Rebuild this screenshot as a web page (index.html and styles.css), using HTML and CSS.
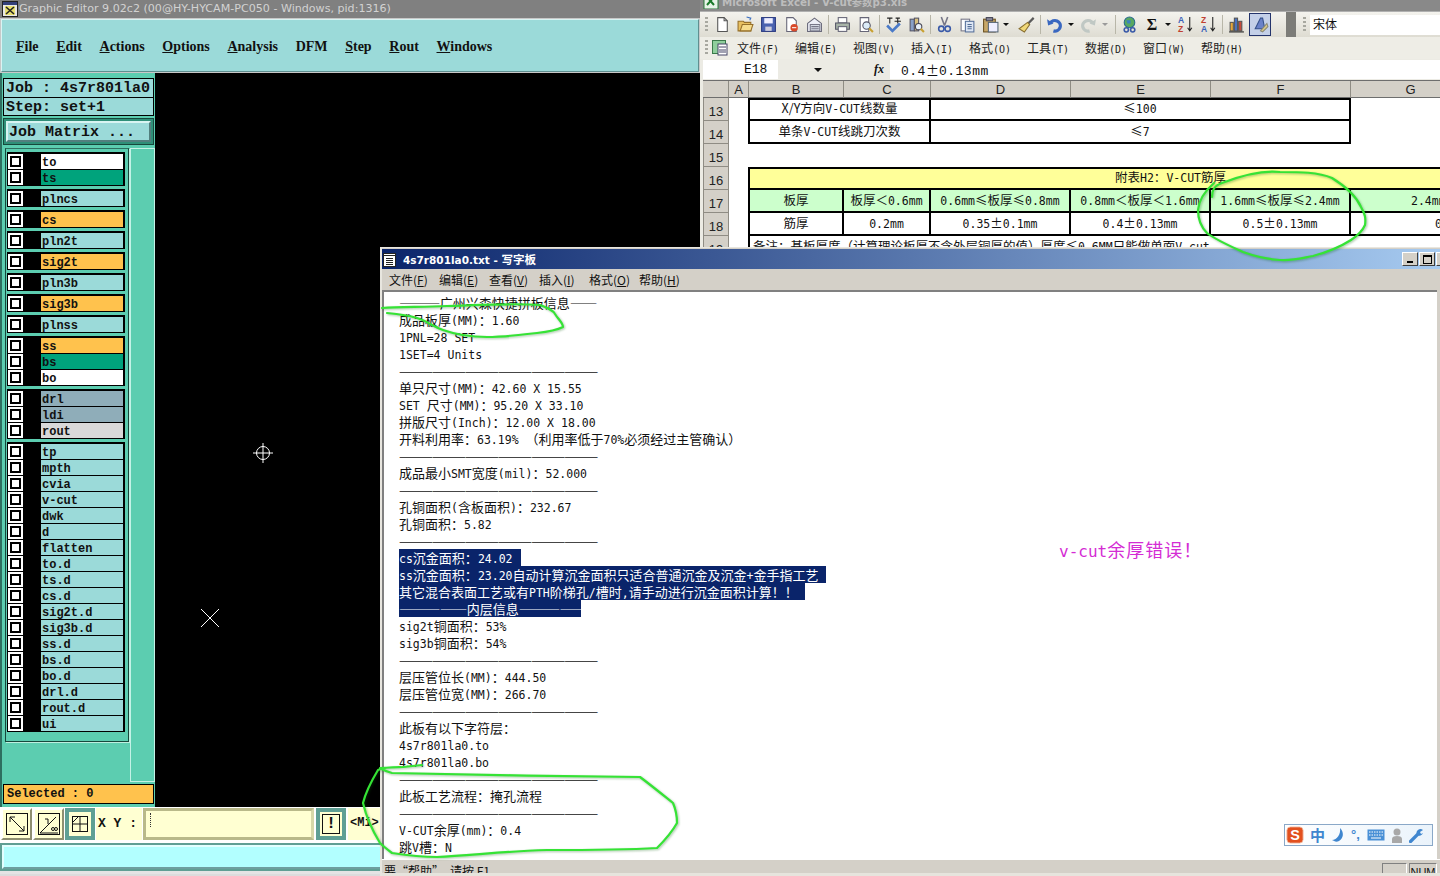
FILE: index.html
```html
<!DOCTYPE html>
<html lang="zh-CN">
<head>
<meta charset="utf-8">
<title>Graphic Editor</title>
<link rel="stylesheet" href="styles.css">
</head>
<body>
<main class="desktop">

<!-- Graphic Editor window -->
<section class="window gwin">
  <header class="g-title">
    <svg class="g-appicon" width="16" height="16" viewBox="0 0 16 16"><rect x=".5" y=".5" width="15" height="15" fill="#e8e8e8" stroke="#222"/><rect x="1" y="1" width="14" height="3" fill="#33407a"/><rect x="3" y="5" width="10" height="9" fill="#e8e070"/><path d="M4 6l8 7M12 6l-8 7" stroke="#222" stroke-width="1.6"/></svg>
    <span>Graphic Editor 9.02c2 (00@HY-HYCAM-PC050 - Windows, pid:1316)</span>
  </header>
  <nav class="g-menu">
    <span><u>F</u>ile</span><span><u>E</u>dit</span><span><u>A</u>ctions</span><span><u>O</u>ptions</span><span><u>A</u>nalysis</span><span>DFM</span><span><u>S</u>tep</span><span><u>R</u>out</span><span><u>W</u>indows</span>
  </nav>
  <div class="g-work">
    <aside class="panel">
      <div class="info">
        <div class="info-row">Job : 4s7r801la0</div>
        <div class="info-row">Step: set+1</div>
      </div>
      <div class="matrix"><div class="matrix-btn">Job Matrix ...</div></div>
      <div class="layers-wrap">
        <div class="layers">
          <div class="grp">
            <div class="row"><i class="cb"></i><b class="lbl white">to</b></div>
            <div class="row"><i class="cb"></i><b class="lbl green">ts</b></div>
          </div>
          <div class="grp"><div class="row"><i class="cb"></i><b class="lbl">plncs</b></div></div>
          <div class="grp"><div class="row"><i class="cb"></i><b class="lbl orange">cs</b></div></div>
          <div class="grp"><div class="row"><i class="cb"></i><b class="lbl">pln2t</b></div></div>
          <div class="grp"><div class="row"><i class="cb"></i><b class="lbl orange">sig2t</b></div></div>
          <div class="grp"><div class="row"><i class="cb"></i><b class="lbl">pln3b</b></div></div>
          <div class="grp"><div class="row"><i class="cb"></i><b class="lbl orange">sig3b</b></div></div>
          <div class="grp"><div class="row"><i class="cb"></i><b class="lbl">plnss</b></div></div>
          <div class="grp">
            <div class="row"><i class="cb"></i><b class="lbl orange">ss</b></div>
            <div class="row"><i class="cb"></i><b class="lbl green">bs</b></div>
            <div class="row"><i class="cb"></i><b class="lbl white">bo</b></div>
          </div>
          <div class="grp">
            <div class="row"><i class="cb"></i><b class="lbl slate">drl</b></div>
            <div class="row"><i class="cb"></i><b class="lbl slate">ldi</b></div>
            <div class="row"><i class="cb"></i><b class="lbl pale">rout</b></div>
          </div>
          <div class="grp">
            <div class="row"><i class="cb"></i><b class="lbl">tp</b></div>
            <div class="row"><i class="cb"></i><b class="lbl">mpth</b></div>
            <div class="row"><i class="cb"></i><b class="lbl">cvia</b></div>
            <div class="row"><i class="cb"></i><b class="lbl">v-cut</b></div>
            <div class="row"><i class="cb"></i><b class="lbl">dwk</b></div>
            <div class="row"><i class="cb"></i><b class="lbl">d</b></div>
            <div class="row"><i class="cb"></i><b class="lbl">flatten</b></div>
            <div class="row"><i class="cb"></i><b class="lbl">to.d</b></div>
            <div class="row"><i class="cb"></i><b class="lbl">ts.d</b></div>
            <div class="row"><i class="cb"></i><b class="lbl">cs.d</b></div>
            <div class="row"><i class="cb"></i><b class="lbl">sig2t.d</b></div>
            <div class="row"><i class="cb"></i><b class="lbl">sig3b.d</b></div>
            <div class="row"><i class="cb"></i><b class="lbl">ss.d</b></div>
            <div class="row"><i class="cb"></i><b class="lbl">bs.d</b></div>
            <div class="row"><i class="cb"></i><b class="lbl">bo.d</b></div>
            <div class="row"><i class="cb"></i><b class="lbl">drl.d</b></div>
            <div class="row"><i class="cb"></i><b class="lbl">rout.d</b></div>
            <div class="row"><i class="cb"></i><b class="lbl">ui</b></div>
          </div>
        </div>
        <div class="strip"></div>
      </div>
      <div class="selected">Selected : 0</div>
    </aside>
    <div class="canvas">
      <svg class="mark mark-cross" width="20" height="20" viewBox="0 0 20 20"><circle cx="10" cy="10" r="6.5" fill="none" stroke="#fff"/><path d="M10 0v20M0 10h20" stroke="#fff"/></svg>
      <svg class="mark mark-x" width="20" height="20" viewBox="0 0 20 20"><path d="M1 1l18 18M19 1L1 19" stroke="#fff"/></svg>
    </div>
  </div>
  <div class="g-tools">
    <div class="tbtn"><svg width="26" height="26" viewBox="0 0 26 26"><rect x="2.5" y="2.5" width="21" height="21" fill="none" stroke="#111"/><path d="M6 6l14 14M6 6v5M6 6h5M20 20v-5M20 20h-5" stroke="#111" fill="none"/></svg></div>
    <div class="tbtn"><svg width="26" height="26" viewBox="0 0 26 26"><rect x="2.5" y="2.5" width="21" height="21" fill="none" stroke="#111"/><path d="M4 22L20 6M4 22h18M12 8v5M9 8h3" stroke="#111" fill="none"/><circle cx="17" cy="18" r="1.5" fill="none" stroke="#111"/><circle cx="20" cy="18" r="1.5" fill="none" stroke="#111"/></svg></div>
    <div class="tbtn tbtn-on"><svg width="18" height="18" viewBox="0 0 18 18"><rect x="1.5" y="1.5" width="15" height="15" fill="none" stroke="#111"/><path d="M9 2v14M2 9h14M2 7L7 2" stroke="#111" fill="none"/></svg></div>
    <div class="xy">X Y :</div>
    <div class="xy-input"><span class="caret"></span></div>
    <div class="tbtn tbtn-on tbtn-bang"><span class="bang">!</span></div>
    <div class="mode">&lt;Mi&gt;</div>
  </div>
  <div class="g-status"><div class="g-status-in"></div></div>
</section>

<!-- Excel window -->
<section class="window xwin">
  <header class="x-title"><svg class="x-appicon" width="16" height="16" viewBox="0 0 16 16"><rect x="1" y="0" width="14" height="16" fill="#e8f4e8" stroke="#2a7a3a"/><path d="M4 4l7 8M11 4l-7 8" stroke="#1a7a2a" stroke-width="2"/></svg><span class="x-title-t">Microsoft Excel - V-cut参数p3.xls</span></header>
  <div class="x-bar">
    <i class="grip"></i>
    <svg class="ic" viewBox="0 0 16 16"><path d="M3.5 1.5h6l3 3v10h-9z" fill="#fff" stroke="#555"/><path d="M9.5 1.5v3h3" fill="none" stroke="#555"/></svg>
    <svg class="ic" viewBox="0 0 16 16"><path d="M1 5h5l1 1h6v8H1z" fill="#e8c060" stroke="#96702a"/><path d="M3 14l2-6h10l-2 6z" fill="#f6dc8c" stroke="#96702a"/><path d="M9 1l4 1-1 2" fill="none" stroke="#3a6ec0"/></svg>
    <svg class="ic" viewBox="0 0 16 16"><rect x="1.5" y="1.5" width="13" height="13" fill="#4a62b0" stroke="#2a3a80"/><rect x="4" y="2" width="8" height="5" fill="#eef"/><rect x="5" y="10" width="6" height="4" fill="#ccd"/></svg>
    <svg class="ic" viewBox="0 0 16 16"><path d="M3.5 1.5h6l3 3v10h-9z" fill="#fff" stroke="#667"/><circle cx="10.500" cy="11" r="3.500" fill="#d84a2a"/><path d="M8.500 11h4" stroke="#fff"/></svg>
    <svg class="ic" viewBox="0 0 16 16"><path d="M1.500 7L8 2l6.500 5v7.500h-13z" fill="#eef0f8" stroke="#667"/><rect x="4" y="8" width="9" height="6" fill="#d8dee8" stroke="#778"/><path d="M5 10h7M5 12h7" stroke="#778"/></svg>
    <i class="sep"></i>
    <svg class="ic" viewBox="0 0 16 16"><rect x="4" y="1.500" width="8" height="5" fill="#fff" stroke="#667"/><path d="M1.500 6.500h13v6h-13z" fill="#a8b4a8" stroke="#556"/><rect x="4" y="10" width="8" height="4.500" fill="#fff" stroke="#667"/></svg>
    <svg class="ic" viewBox="0 0 16 16"><path d="M3 1.500h8v13H3z" fill="#fff" stroke="#667"/><circle cx="9" cy="9" r="3.500" fill="#dcecf8" stroke="#556"/><path d="M11.500 11.500L15 15" stroke="#c8a030" stroke-width="2"/></svg>
    <i class="sep"></i>
    <svg class="ic" viewBox="0 0 16 16"><path d="M2 2h5M4.500 2v5M10 2h4M9 5h6M12 2v5" stroke="#222"/><path d="M2 9l5 5 7-7" fill="none" stroke="#4a7ac8" stroke-width="2.500"/></svg>
    <svg class="ic" viewBox="0 0 16 16"><rect x="2" y="3" width="4" height="11" fill="#88a0c8" stroke="#556"/><rect x="6" y="2" width="4" height="12" fill="#d8c080" stroke="#556"/><circle cx="10" cy="10" r="3" fill="#e8f0f8" stroke="#445"/><path d="M12 12l3 3" stroke="#c8a030" stroke-width="2"/></svg>
    <i class="sep"></i>
    <svg class="ic" viewBox="0 0 16 16"><path d="M5 1l3 8M11 1L8 9" stroke="#778" stroke-width="1.500"/><circle cx="5" cy="12" r="2.500" fill="none" stroke="#3a5aa8" stroke-width="1.500"/><circle cx="11" cy="12" r="2.500" fill="none" stroke="#3a5aa8" stroke-width="1.500"/></svg>
    <svg class="ic" viewBox="0 0 16 16"><rect x="2" y="3" width="8" height="11" fill="#fff" stroke="#778"/><rect x="6" y="5" width="8" height="10" fill="#dde6f4" stroke="#56709a"/><path d="M8 8h4M8 10h4M8 12h4" stroke="#56709a"/></svg>
    <svg class="ic" viewBox="0 0 16 16"><rect x="1.500" y="3" width="11" height="12" fill="#c8a868" stroke="#6a5020"/><rect x="4" y="1.500" width="6" height="3" fill="#889" stroke="#445"/><rect x="6" y="6" width="9" height="9" fill="#eef" stroke="#567"/></svg>
    <i class="dd"></i>
    <svg class="ic ic-tight" viewBox="0 0 16 16"><path d="M9 6l5-5 1.500 1.500-5 5z" fill="#5a5a5a"/><path d="M9 6l2 2-5 7-5-3z" fill="#f0d878" stroke="#8a7030"/></svg>
    <i class="sep"></i>
    <svg class="ic" viewBox="0 0 16 16"><path d="M4 7a5 5 0 1 1 3 7" fill="none" stroke="#3a68c0" stroke-width="3"/><path d="M1 3l1 6 5-2z" fill="#3a68c0"/></svg>
    <i class="dd dd-s"></i>
    <svg class="ic" viewBox="0 0 16 16"><path d="M12 7a5 5 0 1 0-3 7" fill="none" stroke="#c0c8c4" stroke-width="3"/><path d="M15 3l-1 6-5-2z" fill="#c0c8c4"/></svg>
    <i class="dd dd-s dd-off"></i>
    <i class="sep sep-l"></i>
    <svg class="ic" viewBox="0 0 16 16"><circle cx="8" cy="6" r="5" fill="#58a860" stroke="#2a6a90"/><path d="M5 4h4v3H6z" fill="#3a80c0"/><circle cx="5" cy="13" r="2" fill="none" stroke="#3a5aa8" stroke-width="1.500"/><circle cx="11" cy="13" r="2" fill="none" stroke="#3a5aa8" stroke-width="1.500"/></svg>
    <b class="sigma">Σ</b>
    <i class="dd dd-s"></i>
    <svg class="ic" viewBox="0 0 16 16"><path d="M12 1v13M10 11l2 3 2-3" fill="none" stroke="#222"/><text x="1" y="7" class="az az-b">A</text><text x="1" y="15" class="az az-r">Z</text></svg>
    <svg class="ic" viewBox="0 0 16 16"><path d="M12 1v13M10 11l2 3 2-3" fill="none" stroke="#222"/><text x="1" y="7" class="az az-r">Z</text><text x="1" y="15" class="az az-b">A</text></svg>
    <i class="sep"></i>
    <svg class="ic" viewBox="0 0 16 16"><rect x="2" y="6" width="3" height="8" fill="#e8a838" stroke="#555"/><rect x="6" y="2" width="3" height="12" fill="#4a72c0" stroke="#555"/><rect x="10" y="5" width="3" height="9" fill="#c84a3a" stroke="#555"/><path d="M1 15h14" stroke="#222"/></svg>
    <span class="ic-on"><svg class="ic ic-flat" viewBox="0 0 16 16"><path d="M3 12L8 2h2l2 10z" fill="#6a82c8" stroke="#34508a"/><path d="M8 14l6-7 1 3-5 5z" fill="#d8c888" stroke="#887"/></svg></span>
    <i class="chev"></i>
    <i class="grip grip-2"></i>
    <div class="fontbox">宋体</div>
  </div>
  <div class="x-bar x-menu">
    <i class="grip"></i>
    <svg class="x-doc" width="18" height="18" viewBox="0 0 18 18"><rect x="1.500" y="1.500" width="13" height="13" fill="#8fcf9c" stroke="#3a7a4a"/><rect x="7" y="5" width="9" height="11" fill="#fff" stroke="#446"/><path d="M8 8h7M8 11h7M8 13h7" stroke="#446"/></svg>
    <span class="xm">文件<em>(F)</em></span><span class="xm">编辑<em>(E)</em></span><span class="xm">视图<em>(V)</em></span><span class="xm">插入<em>(I)</em></span><span class="xm">格式<em>(O)</em></span><span class="xm">工具<em>(T)</em></span><span class="xm">数据<em>(D)</em></span><span class="xm">窗口<em>(W)</em></span><span class="xm">帮助<em>(H)</em></span>
  </div>
  <div class="x-formula">
    <div class="namebox">E18</div>
    <i class="nb-arrow"></i>
    <i class="fx">fx</i>
    <div class="fbox"><code>0.4</code>±<code>0.13mm</code></div>
  </div>
  <div class="sheet">
    <div class="h corner"></div><div class="h">A</div><div class="h">B</div><div class="h">C</div><div class="h">D</div><div class="h">E</div><div class="h">F</div><div class="h">G</div>

    <div class="rh">13</div><div></div>
    <div class="c first top merge-bc">X/Y方向<code>V-CUT</code>线数量</div>
    <div class="c top merge-df">≤<code>100</code></div><div></div>

    <div class="rh">14</div><div></div>
    <div class="c first merge-bc">单条<code>V-CUT</code>线跳刀次数</div>
    <div class="c merge-df">≤<code>7</code></div><div></div>

    <div class="rh">15</div><div class="blank-row"></div>

    <div class="rh">16</div><div></div>
    <div class="c first top yellow span-all">附表<code>H2</code>：<code>V-CUT</code>筋厚</div>

    <div class="rh">17</div><div></div>
    <div class="c first lgreen">板厚</div>
    <div class="c lgreen">板厚＜<code>0.6mm</code></div>
    <div class="c lgreen"><code>0.6mm</code>≤板厚≤<code>0.8mm</code></div>
    <div class="c lgreen"><code>0.8mm</code>＜板厚＜<code>1.6mm</code></div>
    <div class="c lgreen"><code>1.6mm</code>≤板厚≤<code>2.4mm</code></div>
    <div class="c lgreen open g17"><code>2.4mm</code>＜板厚</div>

    <div class="rh">18</div><div></div>
    <div class="c first">筋厚</div>
    <div class="c"><code>0.2mm</code></div>
    <div class="c"><code>0.35</code>±<code>0.1mm</code></div>
    <div class="c"><code>0.4</code>±<code>0.13mm</code></div>
    <div class="c"><code>0.5</code>±<code>0.13mm</code></div>
    <div class="c open g18"><code>0.6</code>±<code>0.13mm</code></div>

    <div class="rh">19</div><div></div>
    <div class="c first note span-all">备注：基板厚度（计算理论板厚不含外层铜厚的值）厚度≤<code>0.6MM</code>只能做单面<code>V-cut</code></div>
  </div>
</section>

<!-- WordPad window -->
<section class="window wwin">
  <header class="w-title">
    <svg class="w-icon" width="13" height="15" viewBox="0 0 13 15"><rect x=".5" y="1.500" width="12" height="13" fill="#fff" stroke="#222"/><path d="M.5 1.500h12v2H.5zM3 6.500h7M3 8.500h7M3 10.500h7M3 12.500h7" fill="none" stroke="#222"/></svg>
    <span class="w-name"><span class="w-latin">4s7r801la0.txt - </span>写字板</span>
    <span class="w-btns">
      <i class="wb"><i class="wb-min"></i></i>
      <i class="wb"><i class="wb-max"></i></i>
      <i class="wb wb-x"></i>
    </span>
  </header>
  <nav class="w-menu">
    <span class="wm">文件(<u>F</u>)</span><span class="wm">编辑(<u>E</u>)</span><span class="wm">查看(<u>V</u>)</span><span class="wm">插入(<u>I</u>)</span><span class="wm">格式(<u>O</u>)</span><span class="wm">帮助(<u>H</u>)</span>
  </nav>
  <div class="w-doc">
    <div class="ln"><span class="dash d-a">———</span>广州兴森快捷拼板信息<span class="dash d-b">——</span></div>
    <div class="ln">成品板厚<code>(MM)</code>：<code>1.60</code></div>
    <div class="ln"><code>1PNL=28 SET</code></div>
    <div class="ln"><code>1SET=4 Units</code></div>
    <div class="ln dash">——————————————————</div>
    <div class="ln">单只尺寸<code>(MM)</code>：<code>42.60 X 15.55</code></div>
    <div class="ln"><code>SET </code>尺寸<code>(MM)</code>：<code>95.20 X 33.10</code></div>
    <div class="ln">拼版尺寸<code>(Inch)</code>：<code>12.00 X 18.00</code></div>
    <div class="ln">开料利用率：<code>63.19% </code>（利用率低于<code>70%</code>必须经过主管确认）</div>
    <div class="ln dash">——————————————————</div>
    <div class="ln">成品最小<code>SMT</code>宽度<code>(mil)</code>：<code>52.000</code></div>
    <div class="ln dash">——————————————————</div>
    <div class="ln">孔铜面积<code>(</code>含板面积<code>)</code>：<code>232.67</code></div>
    <div class="ln">孔铜面积：<code>5.82</code></div>
    <div class="ln dash">——————————————————</div>
    <div class="ln sel s1"><code>cs</code>沉金面积：<code>24.02</code></div>
    <div class="ln sel s2"><code>ss</code>沉金面积：<code>23.20</code>自动计算沉金面积只适合普通沉金及沉金<code>+</code>金手指工艺</div>
    <div class="ln sel s3">其它混合表面工艺或有<code>PTH</code>阶梯孔<code>/</code>槽时<code>,</code>请手动进行沉金面积计算！！</div>
    <div class="ln sel s4"><span class="dash d-c">—————</span>内层信息<span class="dash d-c">—————</span></div>
    <div class="ln"><code>sig2t</code>铜面积：<code>53%</code></div>
    <div class="ln"><code>sig3b</code>铜面积：<code>54%</code></div>
    <div class="ln dash">——————————————————</div>
    <div class="ln">层压管位长<code>(MM)</code>：<code>444.50</code></div>
    <div class="ln">层压管位宽<code>(MM)</code>：<code>266.70</code></div>
    <div class="ln dash">——————————————————</div>
    <div class="ln">此板有以下字符层：</div>
    <div class="ln"><code>4s7r801la0.to</code></div>
    <div class="ln"><code>4s7r801la0.bo</code></div>
    <div class="ln dash">——————————————————</div>
    <div class="ln">此板工艺流程：掩孔流程</div>
    <div class="ln dash">——————————————————</div>
    <div class="ln"><code>V-CUT</code>余厚<code>(mm)</code>：<code>0.4</code></div>
    <div class="ln">跳<code>V</code>槽：<code>N</code></div>
    <div class="pink"><code>v-cut</code>余厚错误！</div>
    <div class="ime">
      <svg width="18" height="18" viewBox="0 0 20 20"><rect x="1" y="1" width="18" height="18" rx="4" fill="#e2501e" stroke="#f0c0a8"/><text x="10" y="15.500" text-anchor="middle" class="ime-s">S</text></svg>
      <span class="ime-zh">中</span>
      <svg width="14" height="16" viewBox="0 0 14 16"><path d="M9 1c4 4 4 10-1 13-3 1.500-5 0-7-1 5 0 9-6 8-12z" fill="#3f86cf"/></svg>
      <span class="ime-p">°,</span>
      <svg width="18" height="12" viewBox="0 0 18 12"><rect x=".5" y=".5" width="17" height="11" fill="#4a90d6"/><path d="M2 3h14M2 6h14" stroke="#fff" stroke-dasharray="1.500 1"/><path d="M4 9h10" stroke="#fff"/></svg>
      <svg width="12" height="15" viewBox="0 0 12 15"><circle cx="6" cy="4" r="3.500" fill="#a8a8a8"/><path d="M1 15v-4q0-3 5-3t5 3v4z" fill="#a8a8a8"/></svg>
      <svg width="15" height="15" viewBox="0 0 15 15"><path d="M1.500 13.500l7-7" stroke="#3f86cf" stroke-width="3.200" stroke-linecap="round"/><path d="M8 7a4 4 0 0 1 6-5l-3 2 1 2 2-1a4 4 0 0 1-6 2z" fill="#3f86cf"/></svg>
    </div>
  </div>
  <footer class="w-status">
    <span class="w-status-t">要“帮助”，请按 F1</span>
    <span class="panebox"></span>
    <span class="panebox pane-num">NUM</span>
  </footer>
</section>

<svg class="ink" viewBox="0 0 1440 876" aria-hidden="true">
  <path d="M1212 197C1212 190 1214 186 1222 183C1240 176 1262 170 1280 172C1300 172 1318 172 1332 178C1345 186 1356 196 1361 207C1365 214 1366 218 1365 225C1362 232 1357 236 1351 240C1340 247 1328 252 1313 256C1302 258 1292 261 1280 260C1266 259 1254 256 1243 252C1232 247 1216 240 1207 233C1201 227 1198 219 1198 210C1199 200 1206 190 1214 183"/>
  <path d="M382 308C400 307 425 307 447 306C480 305 515 303 540 305C548 308 553 310 555 314C558 319 563 323 563 327C555 331 546 332 537 333C520 335 503 337 487 337C472 337 457 335 443 330C432 326 427 321 417 318C407 315 397 314 387 313"/>
  <path d="M422 765C408 767 394 768 380 768C385 771 388 772 392 773C470 775 560 776 640 777C652 786 663 795 673 803C676 810 677 816 677 823C672 832 665 840 657 848C620 850 584 850 547 850C510 851 473 855 437 857C420 857 405 855 392 853C388 850 384 847 380 843C372 830 366 816 363 803C366 791 372 780 378 770C384 767 392 767 400 767"/>
</svg>
</main>
</body>
</html>
```
FILE: styles.css
```css
* { box-sizing: border-box; }
html, body { margin: 0; padding: 0; }
body { background: #000; font-family: "Liberation Sans", sans-serif; overflow: hidden; }

.desktop { position: relative; width: 1440px; height: 876px; overflow: hidden; background: #000; }
.window { position: absolute; overflow: hidden; }
i, em { font-style: normal; }
code { font-family: "Liberation Mono", monospace; }

/* ---------- Graphic Editor ---------- */
.gwin { left: 0; top: 0; width: 700px; height: 876px; background: #dcdcdc; display: flex; flex-direction: column; }
.g-title { height: 18px; background: #808080; color: #d2d2d2; display: flex; align-items: center; gap: 1px; padding-left: 2px; font: 11.1px/18px "DejaVu Sans", sans-serif; white-space: nowrap; flex: none; }
.g-appicon { flex: none; }
.g-menu { height: 55px; flex: none; background: #9bdad9; border: 2px solid; border-color: #d9f4f3 #5f8f90 #5f8f90 #d9f4f3; outline: 1px solid #c8c8c8; outline-offset: -1px; display: flex; align-items: center; gap: 17.65px; padding: 2px 0 0 14px; font: bold 14px "Liberation Serif", serif; color: #111; }
.g-work { height: 734px; flex: none; display: flex; background: #000; }

.panel { width: 155px; flex: none; background: #5ccdb0; display: flex; flex-direction: column; border-left: 2px solid #2e6f60; padding-bottom: 3px; }
.info { margin: 5px 1px 0 1px; border: 1px solid #000; background: #000; display: flex; flex-direction: column; gap: 1px; font: bold 15px/20px "Liberation Mono", monospace; color: #111; flex: none; }
.info-row { height: 17.500px; background: #9bdad9; padding-left: 2px; white-space: nowrap; }
.matrix { margin: 2px 1px 0; height: 27px; flex: none; background: #2f8f78; border: 1px solid #17483c; padding: 2px; }
.matrix-btn { height: 21px; background: #9bdad9; border: 2px solid; border-color: #d8f4f2 #527f7e #527f7e #d8f4f2; font: bold 15px/19px "Liberation Mono", monospace; color: #111; padding-left: 1px; white-space: nowrap; }
.layers-wrap { flex: none; display: flex; align-items: flex-start; margin-top: 3px; height: 636px; }
.layers { width: 124px; margin-left: 3px; flex: none; border: 1px solid #17483c; border-top-color: #2e6f60; padding: 3px 3px 9px 1px; display: flex; flex-direction: column; gap: 3px; height: 594px; box-shadow: 1px 1px 0 #bdf0e0; }
.strip { flex: 1; height: 634px; margin-left: 1px; background: #5ccdb0; border: 1px solid #c4f2e6; }
.grp { background: #000; padding: 1px; display: flex; flex-direction: column; }
.row { height: 16px; display: flex; align-items: center; }
.cb { width: 15px; height: 15px; background: #fff; flex: none; border: 2px solid #fff; box-shadow: inset 0 0 0 2px #000; }
.lbl { margin-left: 18px; width: 82px; height: 15px; background: #9bdad9; font: bold 12px/18px "Liberation Mono", monospace; color: #111; flex: none; padding-left: 1px; white-space: nowrap; overflow: hidden; }
.white { background: #fff; }
.green { background: #00a37c; }
.orange { background: #ffc24d; }
.slate { background: #8fadb9; }
.pale { background: #d9d9d9; }
.selected { margin: 0 1px; height: 20px; flex: none; background: #ffc24d; border: 1px solid #000; font: bold 12px/18px "Liberation Mono", monospace; color: #111; padding-left: 3px; }

.canvas { flex: 1; position: relative; background: #000; }
.mark { position: absolute; }
.mark-cross { left: 98px; top: 370px; }
.mark-x { left: 45px; top: 535px; }

.g-tools { height: 36px; flex: none; background: #ffffff; display: flex; align-items: stretch; padding: 1px 0 3px 1px; gap: 1px; }
.tbtn { width: 31px; background: #ffffd2; border: 2px solid; border-color: #fff #8f8f70 #8f8f70 #fff; display: flex; align-items: center; justify-content: center; flex: none; }
.tbtn-on { border: 4px solid #5f9f94; width: 30px; }
.tbtn-bang { margin-left: 1px; }
.bang { width: 18px; height: 20px; border: 1px solid #111; font: bold 16px/18px "Liberation Mono", monospace; text-align: center; color: #111; }
.xy { width: 46px; background: #ffffd2; font: bold 13px/32px "Liberation Mono", monospace; color: #111; padding-left: 2px; white-space: nowrap; flex: none; }
.xy-input { width: 171px; background: #ffffd2; border: 3px solid; border-color: #b9b98a #d8d8a8 #b9b98a #b9b98a; flex: none; padding: 2px 4px; }
.caret { display: block; width: 1px; height: 14px; border-left: 1px dotted #333; }
.mode { flex: 1; background: #ffffd2; font: bold 12px/30px "Liberation Mono", monospace; padding-left: 2px; color: #111; margin-left: 1px; }
.g-status { height: 31px; flex: none; background: #5f9f94; padding: 2px 0 0 2px; border-bottom: 3px solid #e4e4e4; }
.g-status-in { height: 24px; background: #b2ffff; border: 2px solid; border-color: #e2ffff #6d9f9f #6d9f9f #e2ffff; }

/* ---------- Excel ---------- */
.xwin { left: 700px; top: 0; width: 740px; height: 249px; background: #ecebe4; display: flex; flex-direction: column; }
.x-title { height: 12px; flex: none; background: #898989; border-bottom: 1px solid #b0b0b0; display: flex; gap: 3px; overflow: hidden; padding-left: 3px; }
.x-appicon { margin-top: -7px; flex: none; }
.x-title-t { color: #bdbdbd; font: bold 10.300px/11px "DejaVu Sans", "Noto Sans CJK SC", sans-serif; margin-top: -3px; white-space: nowrap; }
.x-bar { height: 25px; flex: none; display: flex; align-items: center; background: linear-gradient(#f4f3ee, #dedcd2); padding-left: 5px; }
.x-menu { height: 22px; background: #eeede6; }
.grip { width: 3px; height: 16px; margin-right: 3px; flex: none; background: repeating-linear-gradient(#a8a8a0 0 2px, transparent 2px 4px); }
.grip-2 { margin: 0 4px 0 7px; }
.ic { width: 17px; height: 17px; margin: 0 3px; flex: none; }
.ic-tight { margin-left: 5px; }
.ic-flat { margin: 0; }
.ic-on { width: 22px; height: 23px; margin-left: 1px; background: #c4d0e8; border: 1px solid #24346c; display: flex; align-items: center; justify-content: center; flex: none; }
.sep { width: 1px; height: 19px; background: #b8b6a8; margin: 0 2px; flex: none; }
.sep-l { margin: 0 2px 0 4px; }
.dd { width: 0; height: 0; border: 3px solid transparent; border-top: 3px solid #111; border-bottom: 0; margin: 0 4px 0 1px; flex: none; }
.dd-s { margin: 0 3px 0 2px; }
.dd-off { border-top-color: #9a9a9a; }
.az { font: bold 8px "Liberation Sans", sans-serif; }
.az-b { fill: #3a62b8; }
.az-r { fill: #c04030; }
.sigma { width: 22px; text-align: center; font: bold 16px "Liberation Serif", serif; flex: none; color: #111; }
.chev { width: 10px; height: 25px; background: #7c7c78; margin-left: 15px; flex: none; }
.fontbox { flex: 1; height: 20px; background: #fff; font: 12px/18px "Noto Sans CJK SC", sans-serif; padding-left: 3px; color: #111; }
.x-doc { margin-right: 8px; flex: none; }
.xm { width: 58px; flex: none; font: 12px/16px "Noto Sans CJK SC", sans-serif; color: #222; white-space: nowrap; }
.xm em { font: 10px "DejaVu Sans Mono", monospace; }
.x-formula { height: 21px; flex: none; display: flex; align-items: center; background: #ecebe4; padding-left: 3px; }
.namebox { width: 75px; height: 19px; background: #fff; font: 13px/19px "Liberation Mono", monospace; color: #111; flex: none; padding-left: 41px; }
.nb-arrow { width: 0; height: 0; border: 4px solid transparent; border-top: 4px solid #111; border-bottom: 0; margin: 0 0 0 36px; flex: none; }
.fx { font: italic bold 12px "Liberation Serif", serif; margin-left: 52px; width: 16px; flex: none; color: #111; }
.fbox { flex: 1; height: 19px; background: #fff; font: 13px/19px "Noto Sans CJK SC", sans-serif; color: #111; padding-left: 11px; white-space: nowrap; }
.fbox code { font-size: 13px; letter-spacing: .5px; }
.sheet { flex: 1; margin-left: 3px; border-top: 1px solid #6e6e6e; display: grid; grid-template-columns: 26px 20px 95px 87px 140px 140px 140px 120px; grid-template-rows: 17px repeat(7, 23px); background: #fff; font: 12.5px/20px "Noto Sans CJK SC", sans-serif; color: #111; overflow: hidden; width: 737px; }
.sheet code { font: 11.500px "DejaVu Sans Mono", monospace; }
.h { background: #d4d0c8; border-right: 1px solid #8f8c84; border-bottom: 1px solid #6e6e6e; text-align: center; font: 13px/17px "Liberation Sans", sans-serif; color: #222; }
.corner { border-right: 1px solid #8f8c84; }
.rh { background: #d4d0c8; border-right: 1px solid #8f8c84; border-bottom: 1px solid #8f8c84; border-left: 1px solid #8f8c84; text-align: center; font: 13px/28px "Liberation Sans", sans-serif; color: #222; }
.c { background: #fff; border-right: 2px solid #000; border-bottom: 2px solid #000; text-align: center; white-space: nowrap; overflow: hidden; }
.first { border-left: 2px solid #000; margin-left: -1px; }
.top { border-top: 2px solid #000; line-height: 16px; }
.merge-bc { grid-column: span 2; }
.merge-df { grid-column: span 3; }
.span-all { grid-column: 3 / -1; }
.blank-row { grid-column: 2 / -1; }
.yellow { background: #ffff99; border-right: 0; padding-left: 120px; }
.lgreen { background: #ccffcc; }
.open { border-right: 0; text-align: left; }
.g17 { padding-left: 60px; }
.g18 { padding-left: 84px; }
.note { text-align: left; border-right: 0; border-bottom: 0; padding-left: 3px; }

/* ---------- WordPad ---------- */
.wwin { left: 380px; top: 247px; width: 1060px; height: 629px; background: #d4d0c8; border-left: 2px solid #e8e6df; border-top: 1px solid #e8e6df; display: flex; flex-direction: column; }
.w-title { height: 20px; margin-top: 1px; flex: none; background: linear-gradient(90deg, #0a246a, #a6caf0); display: flex; align-items: center; padding-left: 1px; color: #fff; }
.w-icon { flex: none; }
.w-name { margin-left: 7px; font: bold 11.500px "Noto Sans CJK SC", sans-serif; white-space: nowrap; }
.w-latin { font-family: "DejaVu Sans", sans-serif; font-size: 10.500px; }
.w-btns { margin-left: auto; display: flex; }
.wb { width: 16px; height: 14px; background: #d4d0c8; border: 1px solid; border-color: #fff #404040 #404040 #fff; display: flex; align-items: center; justify-content: center; flex: none; margin-right: 1px; }
.wb-x { width: 4px; margin-right: 0; border-right: 0; }
.wb-min { width: 6px; height: 2px; background: #000; margin-top: 6px; }
.wb-max { width: 9px; height: 9px; border: 1px solid #000; border-top-width: 2px; }
.w-menu { height: 21px; flex: none; display: flex; align-items: center; padding-left: 7px; background: #d4d0c8; font: 12px/18px "Noto Sans CJK SC", sans-serif; color: #111; }
.wm { width: 50px; flex: none; white-space: nowrap; }
.w-doc { position: relative; flex: 1; min-height: 0; margin-right: 3px; background: #fff; border-top: 2px solid #808080; border-left: 2px solid #808080; padding: 2px 0 0 15px; font: 13px/17px "Noto Sans CJK SC", sans-serif; color: #111; overflow: hidden; }
.w-doc code { font: 11.500px "DejaVu Sans Mono", monospace; }
.ln { height: 17px; line-height: 17px; white-space: nowrap; }
.dash { font-size: 13.800px; letter-spacing: -.89px; }
.d-a { letter-spacing: -.7px; }
.d-b { letter-spacing: -1px; }
.d-c { letter-spacing: -.6px; }
.sel { background: #0a246a; color: #fff; }
.s1 { width: 122px; }
.s2 { width: 427px; }
.s3 { width: 406px; }
.s4 { width: 182px; }
.pink { position: absolute; left: 675px; top: 247px; color: #d42cd4; font-size: 18px; letter-spacing: 1px; line-height: 20px; white-space: nowrap; }
.w-doc .pink code { font: 16px "DejaVu Sans Mono", monospace; letter-spacing: 0; }
.ime { position: absolute; left: 900px; top: 532px; width: 149px; height: 22px; background: linear-gradient(90deg, #ffffff, #eaf3fb); border: 1px solid #8aa8c8; display: flex; align-items: center; gap: 6px; padding-left: 1px; }
.ime-s { font: bold 16px "Liberation Sans", sans-serif; fill: #fff; }
.ime-zh { color: #3f86cf; font: bold 15px/20px "Noto Sans CJK SC", sans-serif; width: 15px; }
.ime-p { color: #3f86cf; font: bold 13px/16px "Liberation Sans", sans-serif; width: 10px; }
.w-status { height: 14px; flex: none; background: #d4d0c8; border-top: 1px solid #fff; display: flex; align-items: flex-start; padding-left: 2px; font: 12px/22px "Noto Sans CJK SC", sans-serif; color: #111; overflow: hidden; margin-bottom: 3px; box-shadow: 0 3px 0 #e6e4dd; }
.w-status-t { flex: 1; }
.panebox { width: 25px; height: 20px; margin: 3px 2px 0 0; border: 1px solid; border-color: #808080 #fff #fff #808080; flex: none; }
.pane-num { width: 28px; font: 11px/17px "Liberation Sans", sans-serif; text-align: center; margin-right: 3px; }

.ink { position: absolute; left: 0; top: 0; width: 1440px; height: 876px; pointer-events: none; fill: none; stroke: #35e335; stroke-width: 2.200; stroke-linecap: round; stroke-linejoin: round; filter: drop-shadow(1px 1px 1px rgba(0, 90, 0, .35)); }
```
